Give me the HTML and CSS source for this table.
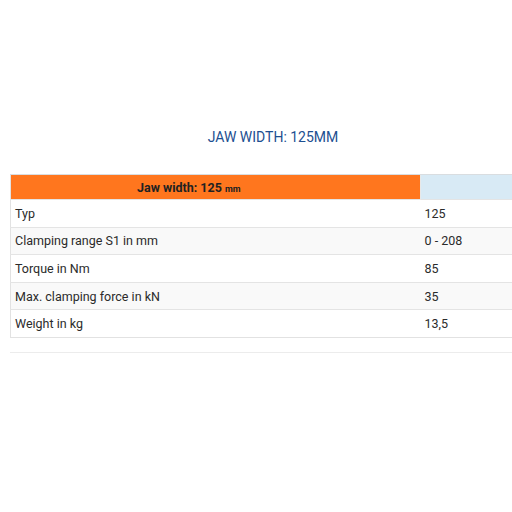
FILE: index.html
```html
<!DOCTYPE html>
<html>
<head>
<meta charset="utf-8">
<link rel="stylesheet" href="styles.css">
</head>
<body>
<div class="page">
  <h2 class="title">JAW WIDTH: 125MM</h2>
  <div class="table-wrap">
    <table class="specs">
      <colgroup>
        <col class="col-label">
        <col class="col-value">
      </colgroup>
      <thead>
        <tr>
          <th class="head-main">Jaw width: 125 <span class="unit">mm</span></th>
          <th class="head-side"></th>
        </tr>
      </thead>
      <tbody>
        <tr><td>Typ</td><td>125</td></tr>
        <tr class="alt"><td>Clamping range S1 in mm</td><td>0 - 208</td></tr>
        <tr><td>Torque in Nm</td><td>85</td></tr>
        <tr class="alt"><td>Max. clamping force in kN</td><td>35</td></tr>
        <tr><td>Weight in kg</td><td>13,5</td></tr>
      </tbody>
    </table>
  </div>
  <div class="separator"></div>
</div>
</body>
</html>
```
FILE: styles.css
```css
html, body {
  margin: 0;
  padding: 0;
  background: #fff;
  overflow: hidden;
}
.page {
  width: 512px;
  height: 512px;
  overflow: hidden;
  font-family: Roboto, "Liberation Sans", sans-serif;
  color: #333;
}
.title {
  margin: 127px 0 0 0;
  padding-left: 34px;
  text-align: center;
  font-weight: 400;
  font-size: 14px;
  line-height: 20px;
  color: #1d4f91;
}
.table-wrap {
  margin: 27px 0 0 10px;
  overflow: hidden;
}
.specs {
  width: 600px;
  table-layout: fixed;
  border-collapse: collapse;
  border: 1px solid #e2e2e2;
  font-size: 12.5px;
}
.col-label {
  width: 410px;
}
.col-value {
  width: 190px;
}
.specs th {
  height: 24px;
  padding: 0;
  border-top: 1px solid #d9dde0;
}
.head-main {
  background: #ff761e;
  color: #222;
  text-align: left;
  padding-left: 126px !important;
  font-weight: 700;
  font-size: 12.5px;
}
.unit {
  font-size: 9px;
  font-weight: 700;
}
.head-side {
  background: #d8eaf5;
  border-left: 1px solid #e8e8e8;
}
.specs td {
  height: 26.6px;
  padding: 0 0 0 4px;
  border-top: 1px solid #e4e4e4;
  vertical-align: middle;
  color: #2b2b2b;
}
.specs tr.alt td {
  background: #f9f9f9;
}
.separator {
  margin: 14px 0 0 10px;
  height: 1px;
  background: #ececec;
}
```
